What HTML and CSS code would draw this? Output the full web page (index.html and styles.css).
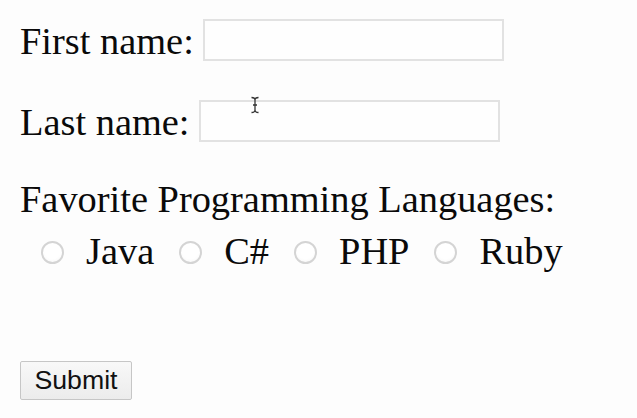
FILE: index.html
```html
<!DOCTYPE html>
<html>
<head>
<meta charset="utf-8">
<link rel="stylesheet" href="styles.css">
</head>
<body>
<form class="form">
  <div class="row row-first">
    <label class="label">First name:</label>
    <input class="text-input" type="text">
  </div>
  <div class="row row-last">
    <label class="label">Last name:</label>
    <span class="field-wrap">
      <input class="text-input" type="text">
      <svg class="cursor" width="10" height="18" viewBox="0 0 10 18"><path d="M1.5 1.5 Q5 1.5 5 4 L5 14 Q5 16.5 1.5 16.5 M8.5 1.5 Q5 1.5 5 4 M5 14 Q5 16.5 8.5 16.5 M3 9 L7 9" fill="none" stroke="#333" stroke-width="1.3"/></svg>
    </span>
  </div>
  <div class="heading">Favorite Programming Languages:</div>
  <div class="radios">
    <label class="option"><input class="radio" type="radio" name="lang"><span>Java</span></label>
    <label class="option"><input class="radio" type="radio" name="lang"><span>C#</span></label>
    <label class="option"><input class="radio" type="radio" name="lang"><span>PHP</span></label>
    <label class="option"><input class="radio" type="radio" name="lang"><span>Ruby</span></label>
  </div>
  <div class="actions">
    <input class="submit" type="submit" value="Submit">
  </div>
</form>
</body>
</html>
```
FILE: styles.css
```css
html, body {
  margin: 0;
  padding: 0;
  background: #fdfdfd;
}
body {
  font-family: "Liberation Serif", "Times New Roman", serif;
  font-size: 38.4px;
  color: #0a0a0a;
}
.form {
  padding: 19px 0 0 20px;
}
.row {
  display: flex;
  align-items: center;
  height: 42px;
  line-height: 44px;
}
.label {
  margin-right: 9.6px;
  position: relative;
  top: 1px;
}
.row-last {
  margin-top: 39px;
}
.field-wrap {
  position: relative;
  display: block;
  height: 42px;
}
.text-input {
  box-sizing: border-box;
  width: 301px;
  height: 42px;
  margin: 0;
  border: 2px solid #e2e2e2;
  background: #fefefe;
  outline: none;
  display: block;
}
.cursor {
  position: absolute;
  left: 51px;
  top: -4px;
}
.heading {
  margin-top: 35px;
  line-height: 44px;
}
.radios {
  display: flex;
  align-items: center;
  margin-top: 6px;
  padding-left: 21px;
  line-height: 44px;
}
.option {
  display: flex;
  align-items: center;
  margin-right: 25px;
}
.option span {
  position: relative;
  top: 2px;
}
.radio {
  appearance: none;
  -webkit-appearance: none;
  box-sizing: border-box;
  width: 23px;
  height: 23px;
  margin: 0 22px 0 0;
  border: 2px solid #d4d4d4;
  border-radius: 50%;
  background: radial-gradient(circle at 50% 40%, #ffffff 55%, #f4f4f4 100%);
  position: relative;
  top: 3px;
}
.actions {
  margin-top: 83px;
}
.submit {
  box-sizing: border-box;
  width: 112px;
  height: 39px;
  margin: 0;
  padding: 0;
  font-family: "Liberation Sans", Arial, sans-serif;
  font-size: 26.7px;
  color: #111;
  border: 1px solid #c6c6c6;
  border-radius: 2px;
  background: linear-gradient(#f8f8f8, #ececec);
}
```
